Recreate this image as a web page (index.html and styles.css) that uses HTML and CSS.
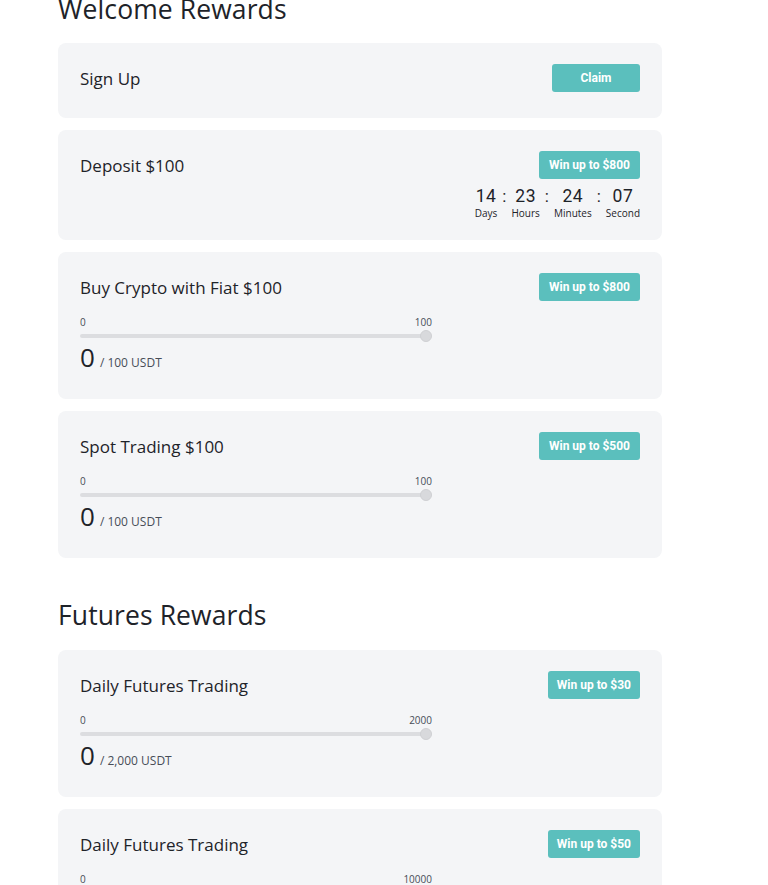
FILE: index.html
```html
<!DOCTYPE html>
<html>
<head>
<meta charset="utf-8">
<link rel="stylesheet" href="styles.css">
</head>
<body>
<div class="page">
  <h2 class="section-title first">Welcome Rewards</h2>
  <div class="card">
    <div class="card-left"><div class="card-title">Sign Up</div></div>
    <div class="card-right"><button class="btn btn-claim">Claim</button></div>
  </div>
  <div class="card">
    <div class="card-left"><div class="card-title">Deposit $100</div></div>
    <div class="card-right">
      <button class="btn">Win up to $800</button>
      <div class="countdown">
        <div class="cd-unit"><span class="cd-num">14</span><span class="cd-lbl">Days</span></div>
        <span class="cd-sep">:</span>
        <div class="cd-unit"><span class="cd-num">23</span><span class="cd-lbl">Hours</span></div>
        <span class="cd-sep">:</span>
        <div class="cd-unit"><span class="cd-num">24</span><span class="cd-lbl">Minutes</span></div>
        <span class="cd-sep">:</span>
        <div class="cd-unit"><span class="cd-num">07</span><span class="cd-lbl">Second</span></div>
      </div>
    </div>
  </div>
  <div class="card tall">
    <div class="card-left">
      <div class="card-title">Buy Crypto with Fiat $100</div>
      <div class="slider">
        <div class="slider-labels"><span>0</span><span>100</span></div>
        <div class="track"><span class="thumb"></span></div>
      </div>
      <div class="amount"><span class="amount-big">0</span><span class="amount-small">/ 100 USDT</span></div>
    </div>
    <div class="card-right"><button class="btn">Win up to $800</button></div>
  </div>
  <div class="card tall">
    <div class="card-left">
      <div class="card-title">Spot Trading $100</div>
      <div class="slider">
        <div class="slider-labels"><span>0</span><span>100</span></div>
        <div class="track"><span class="thumb"></span></div>
      </div>
      <div class="amount"><span class="amount-big">0</span><span class="amount-small">/ 100 USDT</span></div>
    </div>
    <div class="card-right"><button class="btn">Win up to $500</button></div>
  </div>

  <h2 class="section-title second">Futures Rewards</h2>
  <div class="card tall">
    <div class="card-left">
      <div class="card-title">Daily Futures Trading</div>
      <div class="slider">
        <div class="slider-labels"><span>0</span><span>2000</span></div>
        <div class="track"><span class="thumb"></span></div>
      </div>
      <div class="amount"><span class="amount-big">0</span><span class="amount-small">/ 2,000 USDT</span></div>
    </div>
    <div class="card-right"><button class="btn btn-narrow">Win up to $30</button></div>
  </div>
  <div class="card tall">
    <div class="card-left">
      <div class="card-title">Daily Futures Trading</div>
      <div class="slider">
        <div class="slider-labels"><span>0</span><span>10000</span></div>
        <div class="track"><span class="thumb"></span></div>
      </div>
      <div class="amount"><span class="amount-big">0</span><span class="amount-small">/ 10,000 USDT</span></div>
    </div>
    <div class="card-right"><button class="btn btn-narrow">Win up to $50</button></div>
  </div>
</div>
</body>
</html>
```
FILE: styles.css
```css
* { box-sizing: border-box; }
html, body { margin: 0; padding: 0; background: #ffffff; }
body {
  font-family: "Open Sans", "Noto Sans", sans-serif;
  color: #1e2329;
  overflow: hidden;
}
.page {
  width: 604px;
  margin-left: 58px;
  margin-top: -9px;
  display: flex;
  flex-direction: column;
  gap: 12px;
}
.section-title {
  font-size: 26.5px;
  font-weight: 400;
  line-height: 36px;
  margin: 0;
  color: #1e2329;
  letter-spacing: 0.1px;
}
.section-title.first { margin-bottom: 4px; }
.section-title.second { margin-top: 27px; margin-bottom: 5px; }
.card {
  background: #f4f5f7;
  border-radius: 8px;
  padding: 24px 22px 20px 22px;
  display: flex;
  justify-content: space-between;
  align-items: flex-start;
  min-height: 75px;
}
.card.tall { padding-bottom: 25px; }
.card-left { display: flex; flex-direction: column; }
.card-title {
  font-size: 17px;
  line-height: 24px;
  color: #1e2329;
}
.card-right {
  display: flex;
  flex-direction: column;
  align-items: flex-end;
  margin-top: -3px;
}
.btn {
  font-family: "Roboto", "Liberation Sans", sans-serif;
  font-weight: 700;
  font-size: 12px;
  color: #ffffff;
  background: #5bbfbd;
  border: none;
  border-radius: 3px;
  height: 28px;
  padding: 0 10px;
  line-height: 28px;
}
.btn-claim { width: 88px; }
.btn-narrow { padding: 0 9px; }
.countdown {
  display: flex;
  align-items: flex-start;
  margin-top: 7px;
}
.cd-unit {
  display: flex;
  flex-direction: column;
  align-items: center;
  min-width: 22px;
}
.cd-num {
  font-family: "Roboto", "Liberation Sans", sans-serif;
  font-size: 17.5px;
  line-height: 20px;
  color: #1e2329;
  letter-spacing: 0.5px;
}
.cd-lbl {
  font-family: "Open Sans", "Noto Sans", sans-serif;
  font-size: 10px;
  line-height: 14px;
  color: #1e2329;
}
.cd-sep {
  font-family: "Roboto", "Liberation Sans", sans-serif;
  font-size: 17px;
  line-height: 20px;
  padding: 0 5px;
}
.slider {
  width: 352px;
  margin-top: 15px;
}
.slider-labels {
  display: flex;
  justify-content: space-between;
  font-size: 10px;
  line-height: 14px;
  color: #474d57;
}
.track {
  position: relative;
  height: 4px;
  background: #dcdde0;
  border-radius: 2px;
  margin-top: 5px;
  margin-right: 6px;
}
.thumb {
  position: absolute;
  right: -6px;
  top: -4px;
  width: 12px;
  height: 12px;
  border-radius: 50%;
  background: #d8d9dc;
  border: 1px solid #cfd0d3;
}
.amount {
  display: flex;
  align-items: baseline;
  margin-top: 2px;
}
.amount-big {
  font-size: 26px;
  line-height: 34px;
  color: #1e2329;
}
.amount-small {
  font-size: 12px;
  color: #474d57;
  margin-left: 5px;
}
```
